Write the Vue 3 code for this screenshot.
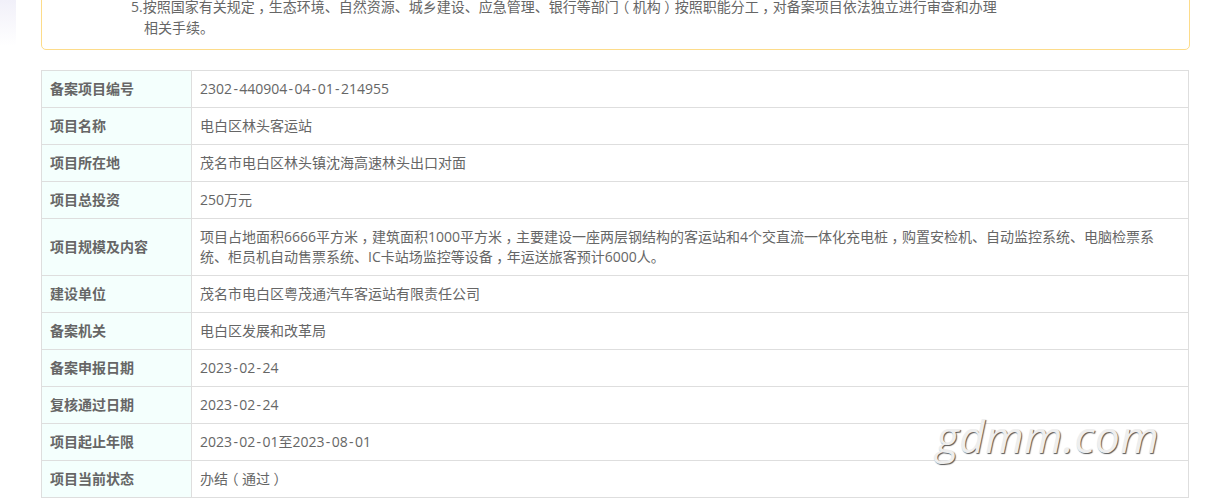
<script setup>
const rows = [
  ['备案项目编号', '2302-440904-04-01-214955'],
  ['项目名称', '电白区林头客运站'],
  ['项目所在地', '茂名市电白区林头镇沈海高速林头出口对面'],
  ['项目总投资', '250万元'],
  ['项目规模及内容', '项目占地面积6666平方米，建筑面积1000平方米，主要建设一座两层钢结构的客运站和4个交直流一体化充电桩，购置安检机、自动监控系统、电脑检票系统、柜员机自动售票系统、IC卡站场监控等设备，年运送旅客预计6000人。'],
  ['建设单位', '茂名市电白区粤茂通汽车客运站有限责任公司'],
  ['备案机关', '电白区发展和改革局'],
  ['备案申报日期', '2023-02-24'],
  ['复核通过日期', '2023-02-24'],
  ['项目起止年限', '2023-02-01至2023-08-01'],
  ['项目当前状态', '办结（通过）'],
]
const parts = (text) => text.split(/([-，（）])/).filter(Boolean)
const classes = { '-': 'hy', '，': 'pn', '（': 'pn', '）': 'pn' }
const first = '5.按照国家有关规定，生态环境、自然资源、城乡建设、应急管理、银行等部门（机构）按照职能分工，对备案项目依法独立进行审查和办理'
</script>

<template>
  <div class="page">
    <div class="corner"></div>
    <div class="notice">
      <p class="item"><span v-for="(p, i) in parts(first)" :key="i" :class="classes[p]">{{ p }}</span><br><span class="cont">相关手续。</span></p>
    </div>
    <table class="info">
      <tbody>
        <tr v-for="r in rows" :key="r[0]">
          <th>{{ r[0] }}</th>
          <td><span v-for="(p, i) in parts(r[1])" :key="i" :class="classes[p]">{{ p }}</span></td>
        </tr>
      </tbody>
    </table>
    <div class="mark">gdmm.com</div>
  </div>
</template>

<style>
html, body { margin: 0; background: #fff; overflow: hidden; }
</style>

<style scoped>
.page {
  position: relative;
  width: 1206px;
  height: 499px;
  overflow: hidden;
  font-family: "Open Sans", "Noto Sans CJK SC", sans-serif;
  font-size: 14px;
  color: #666;
  text-spacing-trim: space-all;
}
.corner {
  position: absolute;
  left: 0;
  top: 0;
  width: 16px;
  height: 46px;
  background: linear-gradient(180deg, #f1f0f9 0%, #fff 100%);
}
.notice {
  box-sizing: border-box;
  width: 1149px;
  height: 60px;
  margin: -10px 0 20px 41px;
  padding: 5px 0 0 89px;
  border: 1px solid #fddc8a;
  border-radius: 5px;
}
.item {
  margin: 0;
  line-height: 21px;
}
.cont { margin-left: 13px; }
.hy { padding: 0 1.35px; }
.pn {
  padding: 0 3.5px;
  font-feature-settings: "halt";
}
.info {
  width: 1148px;
  margin-left: 41px;
  border-collapse: collapse;
  table-layout: fixed;
}
th, td {
  border: 1px solid #dedede;
  padding: 8px;
  line-height: 20px;
  text-align: left;
  vertical-align: middle;
}
th {
  width: 133px;
  background: #f4fffd;
  font-weight: 700;
}
.mark {
  position: absolute;
  left: 936px;
  top: 408px;
  font-family: "Open Sans", sans-serif;
  font-size: 44px;
  font-style: italic;
  font-weight: 400;
  line-height: 56px;
  letter-spacing: 0.5px;
  color: #eeeeee;
  text-shadow: 1px 1px 1px #555;
}
</style>
